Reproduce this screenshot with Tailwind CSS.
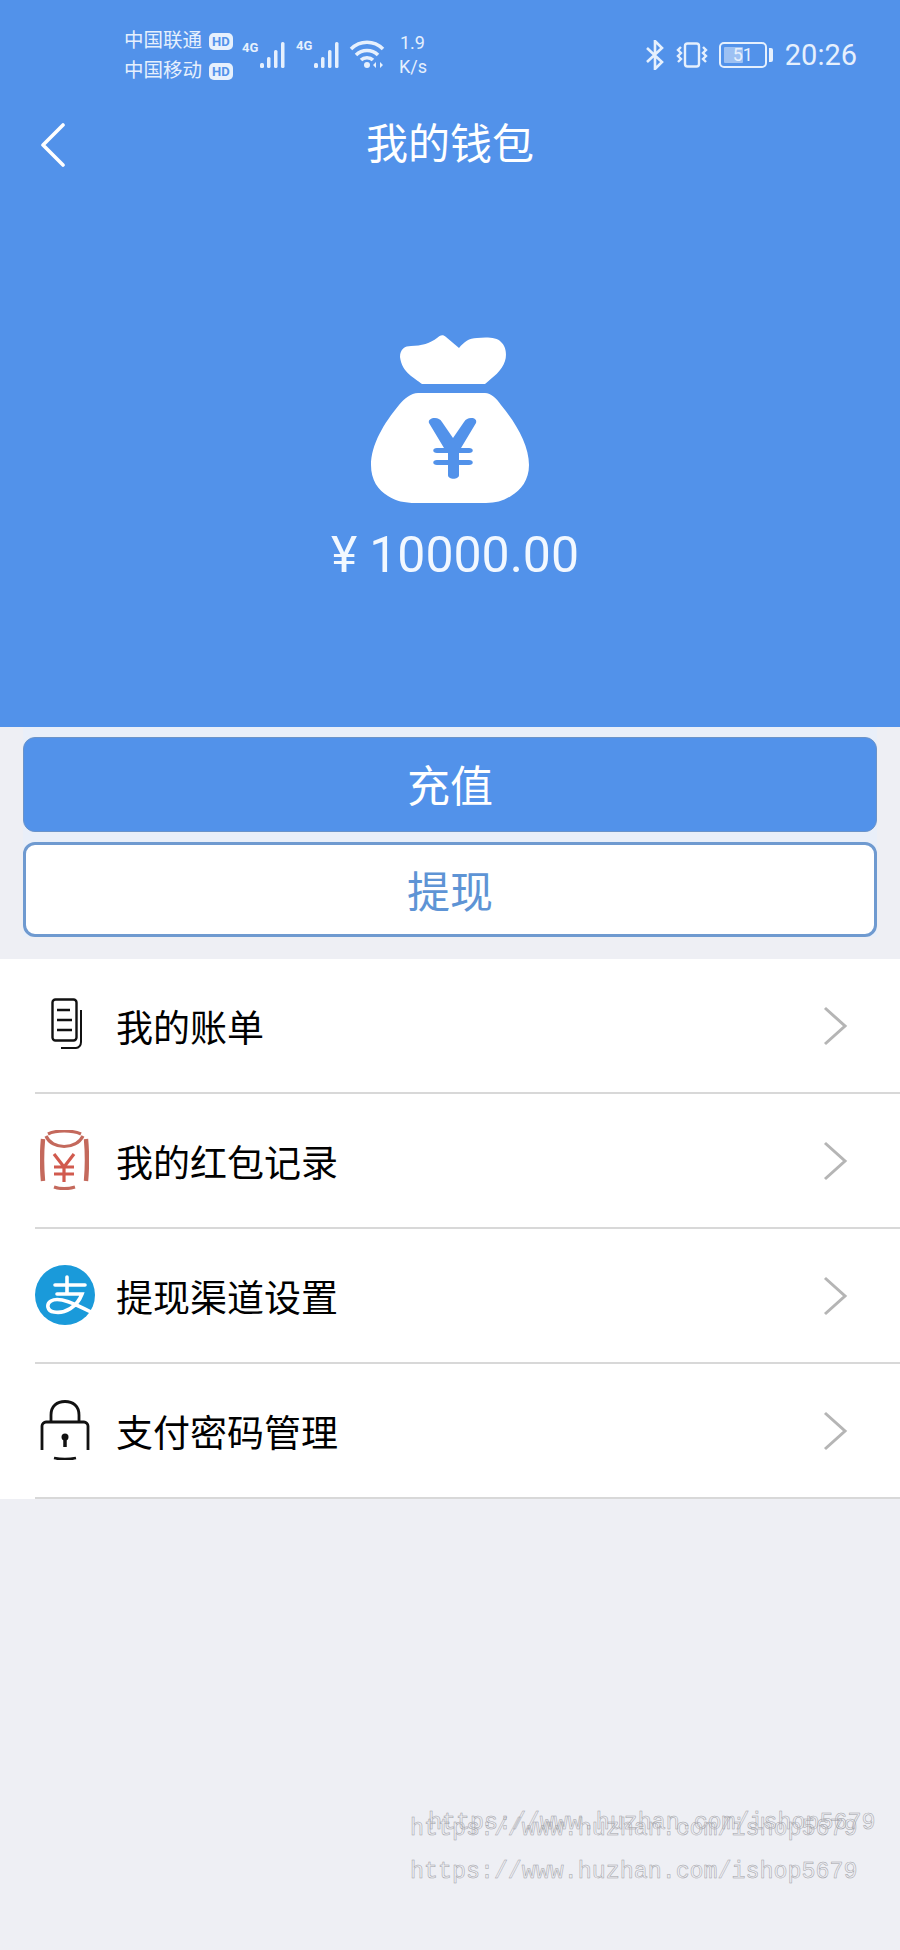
<!DOCTYPE html>
<html lang="zh-CN">
<head>
  <meta charset="UTF-8">
  <title>我的钱包</title>
  <script src="https://cdn.jsdelivr.net/npm/@tailwindcss/browser@4"></script>
</head>
<body class="bg-[#eeeff4] h-[1950px] w-[900px] overflow-hidden relative font-['Roboto','Noto_Sans_CJK_SC',sans-serif]">

  <!-- Header -->
  <div class="bg-[#5292ea] h-[727px] text-white flex flex-col">
    <!-- Status bar -->
    <div class="h-[112px] shrink-0 pl-[124px] pr-[43px] pt-[26px] flex text-[#e6f0fd]">
      <div class="w-[116px] text-[19.5px] leading-[30px]">
        <div class="flex items-center gap-[7px] whitespace-nowrap">中国联通<span class="bg-[#e6f0fd] text-[#5292ea] text-[13px] leading-[17px] font-bold rounded-[5px] px-[3px]">HD</span></div>
        <div class="flex items-center gap-[7px] whitespace-nowrap">中国移动<span class="bg-[#e6f0fd] text-[#5292ea] text-[13px] leading-[17px] font-bold rounded-[5px] px-[3px]">HD</span></div>
      </div>
      <div class="flex items-start pt-[12px] ml-[2px]">
        <svg width="54" height="32" viewBox="0 0 54 32" fill="#e6f0fd">
          <text x="0" y="14" font-size="13" font-weight="700" font-family="Roboto">4G</text>
          <rect x="18" y="25" width="4" height="5" rx="1.5"/><rect x="25" y="19" width="3.5" height="11" rx="1.5"/><rect x="32" y="12" width="3.5" height="18" rx="1.5"/><rect x="39" y="4" width="3.5" height="26" rx="1.5"/>
        </svg>
        <svg width="54" height="32" viewBox="0 0 54 32" fill="#e6f0fd">
          <text x="0" y="12" font-size="13" font-weight="700" font-family="Roboto">4G</text>
          <rect x="18" y="25" width="4" height="5" rx="1.5"/><rect x="25" y="19" width="3.5" height="11" rx="1.5"/><rect x="32" y="12" width="3.5" height="18" rx="1.5"/><rect x="39" y="4" width="3.5" height="26" rx="1.5"/>
        </svg>
        <svg width="38" height="32" viewBox="0 0 38 32" fill="none" stroke="#e6f0fd" stroke-width="3.5" class="-ml-[1px]">
          <path d="M2 11c9-9 23-9 32 0"/><path d="M7 17c6-6 16-6 22 0"/><path d="M12 22c3-3 9-3 12 0"/>
          <circle cx="18" cy="27" r="3" fill="#e6f0fd" stroke="none"/>
          <path d="M27 24l-3 3 3 3zM31 24l3 3-3 3z" fill="#e6f0fd" stroke="none"/>
        </svg>
      </div>
      <div class="ml-[12px] text-[18px] leading-[24px] pt-[5px]">
        <div class="pl-[1px]">1.9</div>
        <div>K/s</div>
      </div>
      <div class="ml-auto flex items-center h-[32px] mt-[13px]">
        <svg width="20" height="30" viewBox="0 0 20 30" fill="none" stroke="#e6f0fd" stroke-width="2.6" class="mr-[11px]">
          <path d="M2 8l15 14-7 7V1l7 7L2 22"/>
        </svg>
        <svg width="32" height="26" viewBox="0 0 32 26" fill="none" stroke="#e6f0fd" stroke-width="2.4" class="mr-[11px]">
          <rect x="9" y="1.500" width="14" height="23" rx="2.500"/>
          <path d="M5 5L2 8l3 3-3 3 3 3-3 3M27 5l3 3-3 3 3 3-3 3 3 3"/>
        </svg>
        <div class="relative w-[48px] h-[26px] border-[2.5px] border-[#e6f0fd] rounded-[5px] p-[3px]">
          <div class="h-full w-[51%] bg-[#9dc1f3] rounded-[1px]"></div>
          <div class="absolute inset-0 flex items-center justify-center text-[18px] leading-none">51</div>
        </div>
        <div class="w-[4px] h-[14px] bg-[#e6f0fd] rounded-r-[2px] ml-[2px]"></div>
        <div class="ml-[12px] text-[29px] leading-none">20:26</div>
      </div>
    </div>
    <!-- Title bar -->
    <div class="h-[66px] shrink-0 relative flex items-center justify-center">
      <svg class="absolute left-[40px] top-[11px]" width="26" height="44" viewBox="0 0 26 44" fill="none" stroke="white" stroke-width="3.6" stroke-linecap="round" stroke-linejoin="round">
        <path d="M23 2L3 22l20 20"/>
      </svg>
      <span class="text-[42px] leading-none">我的钱包</span>
    </div>
    <!-- Balance -->
    <div class="flex flex-col items-center pt-[157px]">
      <svg width="158" height="168" viewBox="0 0 158 168" fill="white">
        <path d="M29 22C29 14 34 11 40 11C50 11 60 8 66 3C69 0 72-1 75 2L88 13C93 7 98 3 106 3C115 2 126 2 130 7C135 11 136 20 134 26C131 36 122 42 114 49H51C44 43 31 38 29 22Z"/>
        <path d="M47 58H114C120 58 126 64 130 70C145 88 158 110 158 130C158 145 150 155 140 161C132 166 125 168 115 168H45C33 168 25 166 17 161C7 155 0 145 0 130C0 110 13 88 28 70C33 64 40 58 47 58Z"/>
        <path fill="#5292ea" d="M58 88C57 85 60 83 64 83C67 83 69 84 71 87L82 103L93 87C95 84 97 83 100 83C104 83 106 85 105 88L90 113H98C103 113 103 118 98 118H88V125H98C103 125 103 130 98 130H88V140C88 145 77 145 77 140V130H66C61 130 61 125 66 125H77V118H66C61 118 61 113 66 113H73Z"/>
      </svg>
      <div class="text-[50px] leading-none mt-[27px] ml-[10px] flex items-baseline text-[#f2f8ff]">
        <span class="mr-[12px]">¥</span>10000.00
      </div>
    </div>
  </div>

  <!-- Buttons -->
  <div class="bg-[#e9eff9] mx-[23px] pt-[10px] flex flex-col gap-[10px]">
    <button class="h-[95px] pt-[5px] bg-[#5292ea] border-[1.5px] border-[#6a93c9] rounded-[12px] text-white text-[43px]">充值</button>
    <button class="h-[95px] pt-[8px] bg-white border-[3px] border-[#6f9ad0] rounded-[12px] text-[#5e94d5] text-[43px]">提现</button>
  </div>

  <!-- Menu -->
  <div class="mt-[22px] bg-white text-black text-[37px]">
    <div class="ml-[35px] h-[135px] border-b-2 border-[#d8d8d8] flex items-center pr-[52px] pb-[2px]">
      <div class="w-[81px] shrink-0">
        <svg width="36" height="54" viewBox="0 0 36 54" fill="none" stroke="#111" stroke-width="2.400" class="ml-[16px]">
          <rect x="1.500" y="1.500" width="24" height="41" rx="3"/>
          <path d="M6 12H19M6 22H21M6 32H21"/>
          <path d="M30 12V44c0 3-2 6-5 6H10" stroke-width="2"/>
        </svg>
      </div>
      <span class="pt-[10px]">我的账单</span>
      <svg class="ml-auto mt-[3px]" width="26" height="40" viewBox="0 0 26 40" fill="none" stroke="#b5b5b5" stroke-width="3"><path d="M3 2l20 18L3 38"/></svg>
    </div>
    <div class="ml-[35px] h-[135px] border-b-2 border-[#d8d8d8] flex items-center pr-[52px] pb-[2px]">
      <div class="w-[81px] shrink-0">
        <svg width="49" height="60" viewBox="0 0 49 60" fill="none" stroke="#c4695c" stroke-width="3.200" class="ml-[5px]">
          <path d="M8 4C16 0 32 0 41 4"/>
          <path d="M6 6C12 20 36 20 43 6"/>
          <path d="M3 9C2 20 2 40 3 51M46 9C47 20 47 40 46 51" stroke-width="4.400"/>
          <path d="M14 57C20 59 28 59 35 57"/>
          <path d="M14 24L24 37L34 24M24 37V52M14 37H34M14 44H34" stroke="#d15a4e"/>
        </svg>
      </div>
      <span class="pt-[10px]">我的红包记录</span>
      <svg class="ml-auto mt-[3px]" width="26" height="40" viewBox="0 0 26 40" fill="none" stroke="#b5b5b5" stroke-width="3"><path d="M3 2l20 18L3 38"/></svg>
    </div>
    <div class="ml-[35px] h-[135px] border-b-2 border-[#d8d8d8] flex items-center pr-[52px] pb-[2px]">
      <div class="w-[81px] shrink-0">
        <svg width="60" height="60" viewBox="0 0 60 60" fill="none" stroke="white" stroke-width="3.600" stroke-linecap="round">
          <circle cx="30" cy="30" r="30" fill="#1a9ada" stroke="none"/>
          <path d="M20 20H50M32 12V29M22 29H47C42 42 30 49 19 47 12 46 11 39 16 36 24 31 40 39 58 48"/>
        </svg>
      </div>
      <span class="pt-[10px]">提现渠道设置</span>
      <svg class="ml-auto mt-[3px]" width="26" height="40" viewBox="0 0 26 40" fill="none" stroke="#b5b5b5" stroke-width="3"><path d="M3 2l20 18L3 38"/></svg>
    </div>
    <div class="ml-[35px] h-[135px] border-b-2 border-[#d8d8d8] flex items-center pr-[52px] pb-[2px]">
      <div class="w-[81px] shrink-0">
        <svg width="50" height="60" viewBox="0 0 50 60" fill="none" stroke="#111" stroke-width="2.800" class="ml-[5px]">
          <path d="M11 22V15C11 6 17 1.500 25 1.500S39 6 39 15V22"/>
          <path d="M2 50V26c0-2 2-4 4-4H44c2 0 4 2 4 4V50"/>
          <path d="M14 58c7 1.500 15 1.500 22 0"/>
          <circle cx="25" cy="37" r="3.500" fill="#111" stroke="none"/>
          <path d="M25 38V47" stroke-width="3.500"/>
        </svg>
      </div>
      <span class="pt-[10px]">支付密码管理</span>
      <svg class="ml-auto mt-[3px]" width="26" height="40" viewBox="0 0 26 40" fill="none" stroke="#b5b5b5" stroke-width="3"><path d="M3 2l20 18L3 38"/></svg>
    </div>
  </div>

  <!-- Watermarks, laid over the page -->
  <div class="absolute left-[428px] top-[1812px] text-[23.3px] leading-none text-transparent font-['Liberation_Mono',monospace] [-webkit-text-stroke:0.5px_#a0a0a5] whitespace-nowrap">https://www.huzhan.com/ishop5679</div>
  <div class="absolute left-[410px] top-[1818px] text-[23.3px] leading-none text-transparent font-['Liberation_Mono',monospace] [-webkit-text-stroke:0.5px_#a0a0a5] whitespace-nowrap">https://www.huzhan.com/ishop5679</div>
  <div class="absolute left-[410px] top-[1861px] text-[23.3px] leading-none text-transparent font-['Liberation_Mono',monospace] [-webkit-text-stroke:0.5px_#a0a0a5] whitespace-nowrap">https://www.huzhan.com/ishop5679</div>
</body>
</html>
